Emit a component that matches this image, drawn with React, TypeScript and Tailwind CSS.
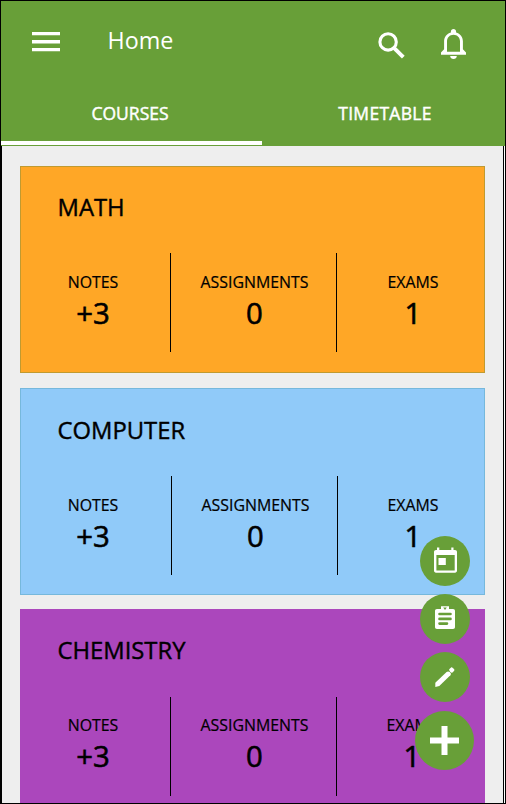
import type { ReactNode } from "react";

type Course = {
  name: string;
  card: string;
  top: string;
  divider: string;
  stat: string;
  col1: string;
  col3: string;
};

const courses: Course[] = [
  {
    name: "MATH",
    card: "h-[207px] bg-[#ffa726] border border-[#c09a30]",
    top: "pt-[23px]",
    divider: "mt-[29px]",
    stat: "pt-[19px]",
    col1: "w-[149px] pr-[5px]",
    col3: "pl-[5px]",
  },
  {
    name: "COMPUTER",
    card: "mt-[15px] h-[207px] bg-[#90caf9] border border-[#76b8dc]",
    top: "pt-[24px]",
    divider: "mt-[29px]",
    stat: "pt-[19px]",
    col1: "w-[150px] pr-[6px]",
    col3: "pl-[4px]",
  },
  {
    name: "CHEMISTRY",
    card: "mt-[14px] h-[207px] bg-[#ab47bc] border border-[#ab47bc]",
    top: "pt-[23px]",
    divider: "mt-[30px]",
    stat: "pt-[18px]",
    col1: "w-[149px] pr-[5px]",
    col3: "pl-[3px]",
  },
];

function Stat({ label, value, className }: { label: string; value: string; className: string }) {
  return (
    <div className={`flex flex-col items-center ${className}`}>
      <span className="text-[15.9px] leading-[20px] whitespace-nowrap [-webkit-text-stroke:0.2px_black]">{label}</span>
      <span className="mt-[3px] text-[29.3px] leading-[36px] [-webkit-text-stroke:0.6px_black]">{value}</span>
    </div>
  );
}

function CourseCard({ course }: { course: Course }) {
  return (
    <section className={`shrink-0 w-[465px] ${course.card}`}>
      <div className={course.top}>
        <h2 className="pl-[36.5px] text-[23.8px] leading-[34px] [-webkit-text-stroke:0.4px_black]">{course.name}</h2>
      </div>
      <div className={`flex h-[99px] ${course.divider}`}>
        <Stat label="NOTES" value="+3" className={`shrink-0 ${course.stat} ${course.col1}`} />
        <div className="w-px shrink-0 bg-black" />
        <Stat label="ASSIGNMENTS" value="0" className={`w-[165px] shrink-0 pl-[2px] ${course.stat}`} />
        <div className="w-px shrink-0 bg-black" />
        <Stat label="EXAMS" value="1" className={`grow ${course.stat} ${course.col3}`} />
      </div>
    </section>
  );
}

function Fab({ children, label }: { children: ReactNode; label: string }) {
  return (
    <button aria-label={label} className="flex size-[50px] items-center justify-center rounded-full bg-[#689f38]">
      {children}
    </button>
  );
}

export default function App() {
  return (
    <div className="relative flex h-[804px] w-[506px] flex-col overflow-hidden border border-black bg-white text-black font-['Open_Sans','Noto_Sans',sans-serif]">
      <header className="flex h-[145px] shrink-0 flex-col bg-[#689f38] text-white">
        <div className="flex h-[84px] items-start pl-[31px]">
          <button aria-label="Menu" className="mt-[31px]">
            <svg width="28" height="20" viewBox="0 0 28 20" fill="white">
              <path d="M0 0H28V3.3H0ZM0 8.1H28V11.5H0ZM0 15.9H28V19.2H0Z" />
            </svg>
          </button>
          <h1 className="mt-[22px] ml-[47.5px] grow text-[23.3px] leading-[34px]">Home</h1>
          <svg className="mt-[29px] mr-[31px]" width="30" height="30" viewBox="0 0 30 30" fill="none" stroke="white">
            <circle cx="11.1" cy="11.9" r="8.2" strokeWidth="3.1" />
            <path d="M17.2 18.1L26.3 27.2" strokeWidth="3.9" />
          </svg>
          <svg className="mt-[27px] mr-[37px]" width="30" height="32" viewBox="0 0 30 32">
            <path
              d="M15.5 1C17 1 18.1 2 18.1 3.4V4.4C22.3 5.5 24.9 9 24.9 13.3V21.3L28 24.4V26.8H3V24.4L6.1 21.3V13.3C6.1 9 8.7 5.5 12.9 4.4V3.4C12.9 2 14 1 15.5 1ZM9 23.7H22V13.3C22 9.5 19.2 6.7 15.5 6.7S9 9.5 9 13.3Z"
              fill="white"
              fillRule="evenodd"
            />
            <path d="M12.2 28H18.8C18.8 29.8 17.3 31 15.5 31S12.2 29.8 12.2 28Z" fill="white" />
          </svg>
        </div>
        <nav className="flex h-[60px] text-[17.5px] leading-[24px] [-webkit-text-stroke:0.45px_white]">
          <button className="w-[261px] border-b-4 border-white pt-[16px] pr-[3px] pb-[16px] text-center">
            COURSES
          </button>
          <button className="grow pt-[16px] pb-[20px] pl-[3px] text-center tracking-[0.3px]">TIMETABLE</button>
        </nav>
      </header>
      <div className="flex min-h-0 grow border-l border-black">
        <main className="flex w-[501px] flex-col overflow-hidden bg-[#eeeeee] pt-[20px] pl-[18px]">
          {courses.map((c) => (
            <CourseCard key={c.name} course={c} />
          ))}
        </main>
        <div className="w-px bg-black" />
      </div>

      <div className="absolute top-[535px] left-[414px] flex w-[59px] flex-col items-center gap-[8px]">
        <Fab label="Calendar">
          <svg width="50" height="50" viewBox="0 0 50 50" fill="white">
            <path
              fillRule="evenodd"
              d="M17 11.5H19.3V14H31.3V11.5H33.5V14H35C36.2 14 37 14.8 37 16V34.5C37 35.9 36.2 36.7 35 36.7H16C14.8 36.7 14 35.9 14 34.5V16C14 14.8 14.8 14 16 14H17ZM16.4 19V34.4H34.7V19Z"
            />
            <rect x="18.5" y="22" width="7.3" height="7" />
          </svg>
        </Fab>
        <Fab label="Assignments">
          <svg width="50" height="50" viewBox="0 0 50 50">
            <path
              fill="white"
              d="M17 15H21V12.3H29V15H33C34.3 15 35 15.7 35 17V33C35 34.3 34.3 35 33 35H17C15.7 35 15 34.3 15 33V17C15 15.7 15.7 15 17 15Z"
            />
            <path d="M23.2 13.6H26.8L25 16Z" fill="#689f38" />
            <path d="M19.5 20H30.5M19.5 24.9H30.5M19.5 29.6H27" stroke="#689f38" strokeWidth="2.6" strokeLinecap="round" />
          </svg>
        </Fab>
        <Fab label="Edit">
          <svg width="50" height="50" viewBox="0 0 50 50" fill="white">
            <path d="M15.3 30.8L26.6 20C27.6 19.1 29 19.3 30 20.3C31 21.3 31.2 22.4 30.4 23.3L19.3 34.1L15.3 34.9Z" />
            <path d="M29.2 17.3L31.1 15.5C31.6 15.1 32.3 15.4 32.8 15.9L34 17.1C34.5 17.6 34.5 18.4 34 18.9L32.2 20.7C31.2 21.3 28.7 18.5 29.2 17.3Z" />
          </svg>
        </Fab>
        <button
          aria-label="Add"
          className="mt-px flex size-[59px] items-center justify-center rounded-full bg-[#689f38]"
        >
          <svg width="59" height="59" viewBox="0 0 59 59" fill="white">
            <path d="M26.5 15H32.5V26.5H44V32.5H32.5V44H26.5V32.5H15V26.5H26.5Z" />
          </svg>
        </button>
      </div>
    </div>
  );
}
